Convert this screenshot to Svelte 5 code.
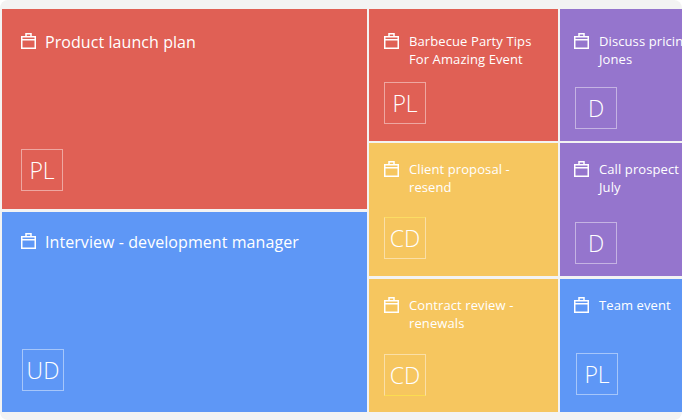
<script>
  const red = '#e06055', blue = '#5e97f6', purple = '#9575cd', yellow = '#f6c65f';
  const big = [
    { title: 'Product launch plan', who: 'PL', color: red, pad: 19, top: 24, left: 19, bottom: 18 },
    { title: 'Interview - development manager', who: 'UD', color: blue, pad: 19, top: 21, left: 20, bottom: 21 }
  ];
  const mid = [
    { title: 'Barbecue Party Tips For Amazing Event', who: 'PL', color: red, pad: 15, top: 23, left: 15, bottom: 17 },
    { title: 'Client proposal - resend', who: 'CD', color: yellow, pad: 15, top: 17, left: 15, bottom: 17, edge: 'top' },
    { title: 'Contract review - renewals', who: 'CD', color: yellow, pad: 15, top: 17, left: 15, bottom: 16, edge: 'bottom' }
  ];
  const last = [
    { title: 'Discuss pricing with Jones', who: 'D', color: purple, pad: 14, top: 23, left: 15, bottom: 12 },
    { title: 'Call prospect in early July', who: 'D', color: purple, pad: 14, top: 17, left: 15, bottom: 12 },
    { title: 'Team event', who: 'PL', color: blue, pad: 14, top: 17, left: 16, bottom: 17 }
  ];
</script>

{#snippet tile(t, large)}
  <article class="tile" class:large style="background:{t.color};padding:{t.top}px 0 {t.bottom}px {t.pad}px">
    <div class="head">
      <svg class="icon" viewBox="0 0 15 16" width="15" height="16" aria-hidden="true">
        <path d="M0.75 3.75H14.25V15.25H0.75Z M0.75 6.75H14.25 M5 3.5V0.75H10V3.5" fill="none" stroke="currentColor" stroke-width="1.5" />
      </svg>
      <span class="title">{t.title}</span>
    </div>
    <div class="avatar" class:edge-top={t.edge === 'top'} class:edge-bottom={t.edge === 'bottom'} style="margin-left:{t.left - t.pad}px">{t.who}</div>
  </article>
{/snippet}

<main class="board">
  <section class="col wide">
    {#each big as t}{@render tile(t, true)}{/each}
  </section>
  <section class="col narrow">
    {#each mid as t}{@render tile(t, false)}{/each}
  </section>
  <section class="col narrow">
    {#each last as t}{@render tile(t, false)}{/each}
  </section>
</main>

<style>
  :global(body) {
    margin: 0;
    background: #fff;
  }
  .board {
    box-sizing: border-box;
    width: 682px;
    height: 420px;
    padding: 9px 0 8px 2px;
    display: flex;
    gap: 2px;
    overflow: hidden;
    background: #f3f3f3;
    border-radius: 8px;
    font-family: "Open Sans", sans-serif;
    color: #fff;
  }
  .col {
    flex: none;
    display: grid;
    gap: 2px;
  }
  .wide {
    width: 365px;
    grid-template-rows: 200px 200px;
    gap: 3px;
  }
  .narrow {
    width: 189px;
    grid-template-rows: 132px 133px 134px;
  }
  .narrow .tile:last-child {
    margin-top: 1px;
  }
  .tile {
    min-height: 0;
    box-sizing: border-box;
    display: flex;
    flex-direction: column;
    justify-content: space-between;
  }
  .head {
    display: flex;
    gap: 10px;
    align-items: flex-start;
    width: 160px;
    font-size: 13px;
    line-height: 18px;
    letter-spacing: 0.1px;
  }
  .large .head {
    width: auto;
    gap: 9px;
    font-size: 16px;
    letter-spacing: 0.07px;
  }
  .icon {
    flex: none;
    margin-top: 1px;
  }
  .large .icon {
    margin-top: 0;
  }
  .title {
    min-width: 0;
    max-width: 134px;
  }
  .large .title {
    max-width: none;
  }
  .avatar {
    box-sizing: border-box;
    width: 42px;
    height: 42px;
    display: flex;
    align-items: center;
    justify-content: center;
    border: 1px solid rgba(255, 255, 255, 0.45);
    font-size: 23px;
    font-weight: 300;
  }
  .edge-top {
    border-top-color: #fbdc63;
  }
  .edge-bottom {
    border-bottom-color: #fbdc50;
  }
</style>
